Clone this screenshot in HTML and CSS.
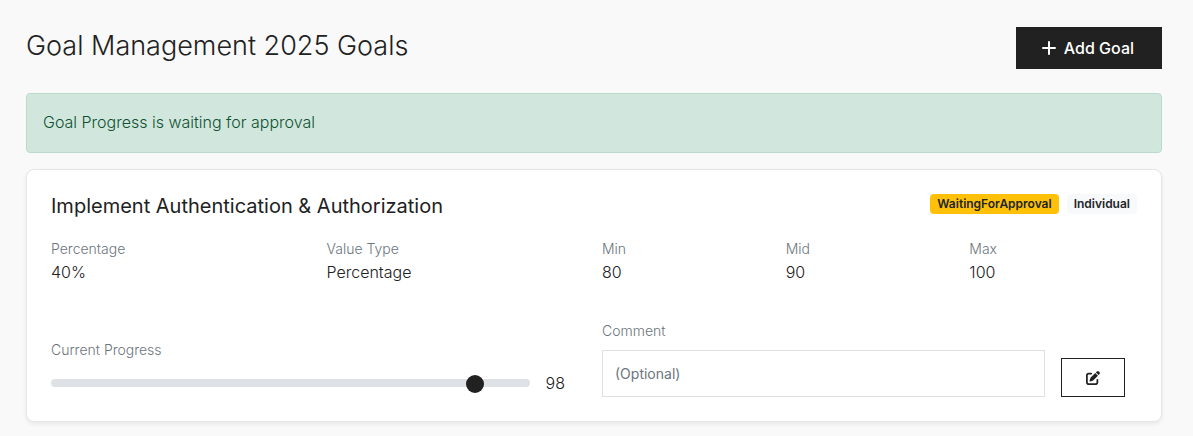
FILE: index.html
```html
<!DOCTYPE html>
<html lang="en">
<head>
<meta charset="utf-8">
<title>Goal Management</title>
<link rel="stylesheet" href="styles.css">
</head>
<body>
<main class="page">
  <header class="page-header">
    <h1 class="page-title">Goal Management 2025 Goals</h1>
    <button type="button" class="add-button">
      <svg class="plus-icon" viewBox="0 0 14 14" aria-hidden="true"><path d="M7 1v12M1 7h12"/></svg>
      <span>Add Goal</span>
    </button>
  </header>
  <div class="alert" role="status">Goal Progress is waiting for approval</div>
  <section class="card">
    <div class="card-header">
      <h2 class="card-title">Implement Authentication &amp; Authorization</h2>
      <div class="badges">
        <span class="badge badge-warning">WaitingForApproval</span>
        <span class="badge badge-light">Individual</span>
      </div>
    </div>
    <dl class="details">
      <div><dt class="label">Percentage</dt><dd class="value">40%</dd></div>
      <div><dt class="label">Value Type</dt><dd class="value">Percentage</dd></div>
      <div><dt class="label">Min</dt><dd class="value">80</dd></div>
      <div><dt class="label">Mid</dt><dd class="value">90</dd></div>
      <div><dt class="label">Max</dt><dd class="value">100</dd></div>
    </dl>
    <form class="progress-form">
      <div class="progress-field">
        <label class="label" for="progress">Current Progress</label>
        <div class="range-row">
          <input class="range" id="progress" type="range" min="80" max="100" value="98">
          <output class="value" for="progress">98</output>
        </div>
      </div>
      <div class="comment-field">
        <label class="label" for="comment">Comment</label>
        <input class="comment-input" id="comment" type="text" placeholder="(Optional)">
      </div>
      <button type="button" class="edit-button" aria-label="Update progress">
        <svg class="edit-icon" viewBox="0 0 512 512" aria-hidden="true"><path d="M471.600 21.700c-21.900-21.900-57.300-21.900-79.200 0L362.300 51.700l97.900 97.900 30.100-30.100c21.900-21.900 21.900-57.300 0-79.200L471.600 21.700zm-299.200 220c-6.100 6.100-10.800 13.600-13.500 21.900l-29.600 88.800c-2.900 8.600-.6 18.100 5.800 24.600s15.900 8.700 24.600 5.800l88.800-29.600c8.200-2.700 15.700-7.400 21.900-13.500L437.700 172.300 339.700 74.300 172.400 241.700zM96 64C43 64 0 107 0 160V416c0 53 43 96 96 96H352c53 0 96-43 96-96V320c0-17.700-14.300-32-32-32s-32 14.300-32 32v96c0 17.700-14.300 32-32 32H96c-17.700 0-32-14.300-32-32V160c0-17.700 14.300-32 32-32h96c17.700 0 32-14.300 32-32s-14.300-32-32-32H96z"/></svg>
      </button>
    </form>
  </section>
</main>
</body>
</html>
```
FILE: styles.css
```css
*, *::before, *::after { box-sizing: border-box; }

body {
  margin: 0;
  background: #f9f9f9;
  color: #212121;
  font-family: Inter, "Liberation Sans", sans-serif;
  font-size: 16px;
  font-weight: 300;
  line-height: 24px;
}

h1, h2, dl, dd { margin: 0; }

.page { padding: 27px 31px 15px 26px; }

.page-header {
  display: flex;
  align-items: center;
  justify-content: space-between;
  margin-bottom: 24px;
}

.page-title {
  font-size: 27px;
  font-weight: 300;
  line-height: 34px;
  padding-bottom: 4px;
}

.add-button {
  display: flex;
  align-items: center;
  gap: 8px;
  height: 42px;
  padding: 0 28px 0 26px;
  border: 0;
  background: #212121;
  color: #fff;
  font: 500 16px/24px Inter, "Liberation Sans", sans-serif;
}

.plus-icon {
  width: 14px;
  height: 14px;
  fill: none;
  stroke: currentColor;
  stroke-width: 2;
  stroke-linecap: round;
}

.alert {
  margin-bottom: 16px;
  padding: 16px 16px 18px;
  border: 1px solid #badbcc;
  border-radius: 4px;
  background: #d1e7dd;
  color: #0f5132;
}

.card {
  padding: 23px 24px 24px;
  border: 1px solid #e7e7e7;
  border-radius: 8px;
  background: #fff;
  box-shadow: 0 2px 4px rgba(0, 0, 0, 0.07);
}

.card-header {
  display: flex;
  align-items: flex-start;
  justify-content: space-between;
  margin-bottom: 19px;
}

.card-title {
  font-size: 20px;
  font-weight: 400;
  line-height: 26px;
}

.badges {
  display: flex;
  gap: 8px;
  padding-top: 1px;
}

.badge {
  padding: 4px 7px;
  border-radius: 4px;
  color: #212529;
  font-size: 12px;
  font-weight: 600;
  line-height: 12px;
}

.badge-warning { background: #ffc107; }
.badge-light { background: #f8f9fa; }

.details {
  display: grid;
  grid-template-columns: 3fr 3fr 2fr 2fr 2fr;
  margin-right: -16px;
  margin-bottom: 36px;
}

.details .value { margin-top: 1px; }

.label {
  display: block;
  color: #6c757d;
  font-size: 14px;
  line-height: 21px;
}

.value { line-height: 24px; }

.progress-form {
  display: grid;
  grid-template-columns: minmax(0, 551fr) minmax(0, 459fr) 64px;
  align-items: end;
  padding-right: 12px;
}

.progress-field {
  padding-right: 37px;
  padding-bottom: 2px;
}

.range-row {
  display: flex;
  align-items: center;
  gap: 16px;
  margin-top: 11px;
}

.range {
  appearance: none;
  flex: 1;
  min-width: 0;
  height: 24px;
  margin: 0;
  background: transparent;
}

.range::-webkit-slider-runnable-track {
  height: 8px;
  border-radius: 4px;
  background: #dee2e6;
}

.range::-webkit-slider-thumb {
  appearance: none;
  width: 18px;
  height: 18px;
  margin-top: -4px;
  border-radius: 50%;
  background: #212121;
}

.comment-field { padding-right: 16px; }

.comment-input {
  display: block;
  width: 100%;
  height: 47px;
  margin-top: 9px;
  padding: 0 12px;
  border: 1px solid #e0e0e0;
  border-radius: 0;
  background: #fff;
  color: #212529;
  font: 400 14px/21px Inter, "Liberation Sans", sans-serif;
}

.comment-input::placeholder { color: #6c757d; opacity: 1; }

.edit-button {
  display: flex;
  align-items: center;
  justify-content: center;
  height: 39px;
  padding: 0;
  border: 1px solid #212121;
  background: #fff;
  color: #212121;
}

.edit-icon {
  width: 14px;
  height: 14px;
  fill: currentColor;
}
```
